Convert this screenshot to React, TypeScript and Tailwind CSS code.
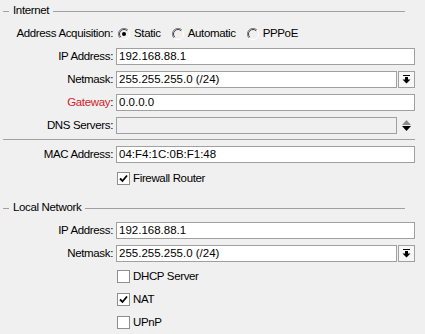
import React from "react"

const font = { fontFamily: '"Liberation Sans", Arial, sans-serif' }

function Header({ title }: { title: string }) {
  return (
    <div className="flex h-[22px] w-[405px] items-center">
      <div className="ml-[3px] h-px w-[6px] bg-[#a0a0a0]" />
      <span className="whitespace-nowrap px-[4px] text-black">{title}</span>
      <div className="h-px flex-1 bg-[#a0a0a0]" />
    </div>
  )
}

function Row({ label, red, children }: { label: string; red?: boolean; children?: React.ReactNode }) {
  return (
    <div className="flex h-[23px] items-center">
      <div className="w-[113px] whitespace-nowrap text-right">
        <span className={red ? "text-[#d2232a]" : "text-black"}>{label}</span>
        {red ? <span className="text-black">:</span> : null}
      </div>
      <div className="ml-[3px] flex w-[299px] items-center">{children}</div>
    </div>
  )
}

function Field({ value, disabled }: { value?: string; disabled?: boolean }) {
  return (
    <div
      className={`flex h-[17px] flex-1 items-center border border-[#a0a0a0] pl-[2px] text-[11.5px] tracking-normal text-black ${disabled ? "bg-[#f0f0f0]" : "bg-white"}`}
    >
      {value}
    </div>
  )
}

function DropButton() {
  return (
    <div className="ml-[1px] flex h-[17px] w-[17px] items-center justify-center border border-[#a0a0a0] bg-[#f7f7f7]">
      <svg width="9" height="9" viewBox="0 0 9 9">
        <rect x="1" y="0" width="7" height="1" fill="#000" />
        <rect x="3" y="2" width="3" height="3" fill="#000" />
        <polygon points="0.5,4.5 8.5,4.5 4.5,8.5" fill="#000" />
      </svg>
    </div>
  )
}

function Radio({ label, checked }: { label: string; checked?: boolean }) {
  return (
    <div className="mr-[11px] flex items-center">
      <svg width="12" height="12" viewBox="0 0 12 12" className="mr-[4px]">
        <path d="M10 2 A5.5 5.5 0 0 0 2 10" stroke="#808080" strokeWidth="1" fill="none" />
        <path d="M9.2 2.8 A4.5 4.5 0 0 0 2.8 9.2" stroke="#404040" strokeWidth="1" fill="none" />
        <path d="M2 10 A5.5 5.5 0 0 0 10 2" stroke="#ffffff" strokeWidth="1" fill="none" />
        {checked ? <circle cx="6" cy="6" r="2" fill="#000" /> : null}
      </svg>
      <span className="text-black">{label}</span>
    </div>
  )
}

function Check({ label, checked }: { label: string; checked?: boolean }) {
  return (
    <div className="flex items-center">
      <div className="ml-[1px] mr-[3px] flex h-[13px] w-[13px] items-center justify-center border border-[#8f8f8f] bg-white">
        {checked ? (
          <svg width="9" height="9" viewBox="0 0 9 9">
            <path d="M1 4.5 L3.5 7 L8 1.5" stroke="#000" strokeWidth="1.8" fill="none" />
          </svg>
        ) : null}
      </div>
      <span className="text-black">{label}</span>
    </div>
  )
}

export default function App() {
  return (
    <div
      className="h-[334px] w-[425px] overflow-hidden bg-[#f0f0f0] text-[11.5px] leading-none tracking-[-0.35px]"
      style={font}
    >
      <Header title="Internet" />
      <Row label="Address Acquisition:">
        <div className="ml-[2px] flex items-center">
          <Radio label="Static" checked />
          <Radio label="Automatic" />
          <Radio label="PPPoE" />
        </div>
      </Row>
      <Row label="IP Address:">
        <Field value="192.168.88.1" />
      </Row>
      <Row label="Netmask:">
        <Field value="255.255.255.0 (/24)" />
        <DropButton />
      </Row>
      <Row label="Gateway" red>
        <Field value="0.0.0.0" />
      </Row>
      <Row label="DNS Servers:">
        <Field disabled />
        <div className="flex w-[18px] flex-col items-center gap-[1px] pl-[1px]">
          <svg width="9" height="5" viewBox="0 0 9 5">
            <polygon points="0,5 9,5 4.5,0" fill="#8a8a8a" />
          </svg>
          <svg width="9" height="5" viewBox="0 0 9 5">
            <polygon points="0,0 9,0 4.5,5" fill="#000" />
          </svg>
        </div>
      </Row>
      <div className="mx-[3px] mt-[2px] mb-[3px] h-px w-[412px] bg-[#a0a0a0]" />
      <Row label="MAC Address:">
        <Field value="04:F4:1C:0B:F1:48" />
      </Row>
      <div className="flex h-[23px] items-center pt-[2px] pl-[116px]">
        <Check label="Firewall Router" checked />
      </div>
      <div className="h-[8px]" />
      <Header title="Local Network" />
      <Row label="IP Address:">
        <Field value="192.168.88.1" />
      </Row>
      <Row label="Netmask:">
        <Field value="255.255.255.0 (/24)" />
        <DropButton />
      </Row>
      <div className="flex h-[23px] items-center pl-[116px]">
        <Check label="DHCP Server" />
      </div>
      <div className="flex h-[23px] items-center pl-[116px]">
        <Check label="NAT" checked />
      </div>
      <div className="flex h-[23px] items-center pl-[116px]">
        <Check label="UPnP" />
      </div>
    </div>
  )
}
